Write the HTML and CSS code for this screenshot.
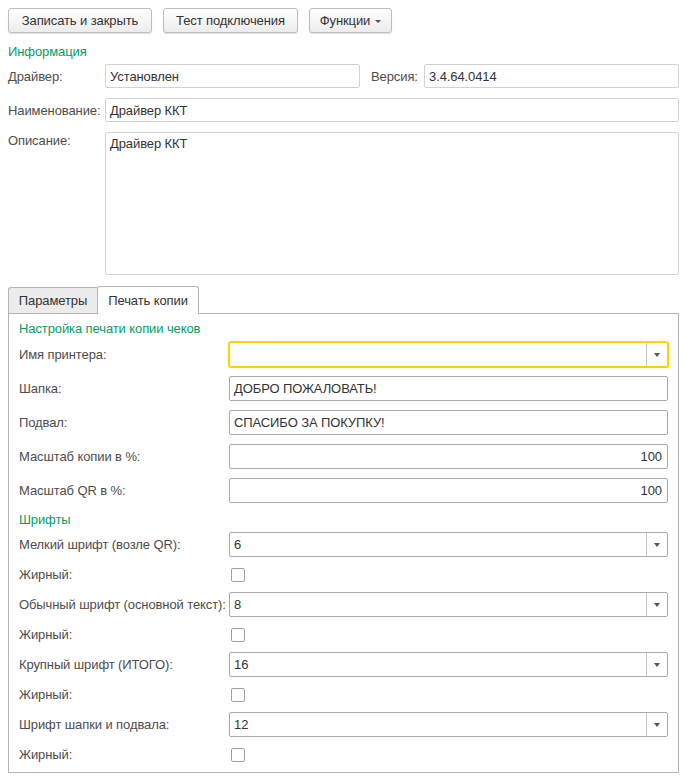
FILE: index.html
```html
<!DOCTYPE html>
<html lang="ru">
<head>
<meta charset="utf-8">
<title>Драйвер ККТ</title>
<link rel="stylesheet" href="styles.css">
</head>
<body>
<div class="page">
  <div class="toolbar">
    <div class="btn btn-save">Записать и закрыть</div>
    <div class="btn btn-test">Тест подключения</div>
    <div class="btn btn-func">Функции <span class="caret"></span></div>
  </div>

  <div class="group-title top-title">Информация</div>

  <div class="row">
    <div class="label">Драйвер:</div>
    <div class="field ro">Установлен</div>
    <div class="label label-ver">Версия:</div>
    <div class="field ro">3.4.64.0414</div>
  </div>
  <div class="row">
    <div class="label">Наименование:</div>
    <div class="field ro">Драйвер ККТ</div>
  </div>
  <div class="row row-area">
    <div class="label label-area">Описание:</div>
    <div class="field ro area">Драйвер ККТ</div>
  </div>

  <div class="tabs">
    <div class="tab">Параметры</div>
    <div class="tab tab-active">Печать копии</div>
  </div>
  <div class="panel">
    <div class="group-title">Настройка печати копии чеков</div>
    <div class="prow first">
      <div class="plabel">Имя принтера:</div>
      <div class="field pf select focus"><span class="val"></span><span class="dd"><span class="arrow"></span></span></div>
    </div>
    <div class="prow">
      <div class="plabel">Шапка:</div>
      <div class="field pf">ДОБРО ПОЖАЛОВАТЬ!</div>
    </div>
    <div class="prow">
      <div class="plabel">Подвал:</div>
      <div class="field pf">СПАСИБО ЗА ПОКУПКУ!</div>
    </div>
    <div class="prow">
      <div class="plabel">Масштаб копии в %:</div>
      <div class="field pf num">100</div>
    </div>
    <div class="prow">
      <div class="plabel">Масштаб QR в %:</div>
      <div class="field pf num">100</div>
    </div>

    <div class="group-title fonts-title">Шрифты</div>
    <div class="prow tight first">
      <div class="plabel">Мелкий шрифт (возле QR):</div>
      <div class="field pf select"><span class="val">6</span><span class="dd"><span class="arrow"></span></span></div>
    </div>
    <div class="prow tight">
      <div class="plabel">Жирный:</div>
      <div class="check"></div>
    </div>
    <div class="prow tight">
      <div class="plabel">Обычный шрифт (основной текст):</div>
      <div class="field pf select"><span class="val">8</span><span class="dd"><span class="arrow"></span></span></div>
    </div>
    <div class="prow tight">
      <div class="plabel">Жирный:</div>
      <div class="check"></div>
    </div>
    <div class="prow tight">
      <div class="plabel">Крупный шрифт (ИТОГО):</div>
      <div class="field pf select"><span class="val">16</span><span class="dd"><span class="arrow"></span></span></div>
    </div>
    <div class="prow tight">
      <div class="plabel">Жирный:</div>
      <div class="check"></div>
    </div>
    <div class="prow tight">
      <div class="plabel">Шрифт шапки и подвала:</div>
      <div class="field pf select"><span class="val">12</span><span class="dd"><span class="arrow"></span></span></div>
    </div>
    <div class="prow tight">
      <div class="plabel">Жирный:</div>
      <div class="check"></div>
    </div>
  </div>
</div>
</body>
</html>
```

FILE: styles.css
```css
* { box-sizing: border-box; }

body {
  margin: 0;
  background: #fff;
  font-family: "Liberation Sans", Arial, sans-serif;
  font-size: 13px;
  letter-spacing: -0.1px;
  color: #4d4d4d;
}

.page {
  width: 671px;
  margin-left: 8px;
  padding-top: 8px;
}

/* toolbar */
.toolbar {
  display: flex;
  gap: 11px;
  height: 25px;
}

.btn {
  height: 25px;
  border: 1px solid #bdbdbd;
  border-radius: 3px;
  background: linear-gradient(#ffffff, #ececec);
  box-shadow: 0 1px 1px rgba(0, 0, 0, 0.12);
  color: #333;
  display: flex;
  align-items: center;
  justify-content: center;
  gap: 5px;
}

.btn-save { width: 144px; }
.btn-test { width: 135px; }
.btn-func { width: 83px; }

.caret {
  width: 0;
  height: 0;
  border-left: 3px solid transparent;
  border-right: 3px solid transparent;
  border-top: 3px solid #555;
  margin-top: 1px;
}

/* group titles */
.group-title {
  color: #00a064;
  height: 16px;
  line-height: 16px;
  margin-bottom: 4px;
}

.top-title { margin-top: 11px; }

/* info rows */
.row {
  display: flex;
  align-items: center;
  height: 24px;
  margin-bottom: 10px;
}

.label {
  width: 97px;
  flex: none;
}

.label-ver {
  width: 53px;
  margin-left: 11px;
}

.field {
  flex: 1;
  height: 24px;
  border: 1px solid #d2d2d2;
  border-radius: 2px;
  background: #fff;
  padding: 0 4px;
  display: flex;
  align-items: center;
  color: #333;
  white-space: nowrap;
  overflow: hidden;
}

.row-area {
  height: 143px;
  align-items: flex-start;
  margin-bottom: 11px;
}

.label-area { padding-top: 1px; }

.field.area {
  height: 143px;
  align-items: flex-start;
  padding-top: 3px;
}

/* tabs */
.tabs {
  display: flex;
  align-items: flex-end;
  height: 28px;
  margin-bottom: -1px;
  position: relative;
  z-index: 1;
}

.tab {
  height: 27px;
  width: 89px;
  border: 1px solid #b4b4b4;
  border-right: none;
  border-radius: 3px 0 0 0;
  background: #ececec;
  color: #333;
  display: flex;
  align-items: center;
  justify-content: center;
}

.tab-active {
  height: 28px;
  width: 102px;
  border-right: 1px solid #b4b4b4;
  border-bottom: none;
  border-radius: 3px 3px 0 0;
  background: #fff;
  padding-bottom: 1px;
}

/* panel */
.panel {
  border: 1px solid #b4b4b4;
  padding: 7px 10px 4px 10px;
  height: 460px;
}

.prow {
  display: flex;
  align-items: center;
  height: 25px;
  margin-top: 9px;
}

.prow.tight { margin-top: 5px; }
.prow.first { margin-top: 5px; }
.prow.tight.first { margin-top: 0; }

.plabel {
  width: 210px;
  flex: none;
  white-space: nowrap;
}

.field.pf {
  height: 25px;
  border-color: #a9a9a9;
}

.field.num { justify-content: flex-end; padding-right: 5px; }

.field.select { padding-right: 0; }

.val { flex: 1; }

.dd {
  width: 21px;
  height: 100%;
  border-left: 1px solid #c4c4c4;
  display: flex;
  align-items: center;
  justify-content: center;
}

.arrow {
  width: 0;
  height: 0;
  border-left: 3px solid transparent;
  border-right: 3px solid transparent;
  border-top: 4px solid #555;
}

.field.focus {
  border-color: #ffd200;
  box-shadow: 0 0 0 1px #ffd200;
}

.fonts-title {
  margin-top: 9px;
  margin-bottom: 4px;
}

.check {
  width: 14px;
  height: 14px;
  margin-left: 2px;
  border: 1px solid #a0a0a0;
  border-radius: 2px;
  background: #fff;
}
```
